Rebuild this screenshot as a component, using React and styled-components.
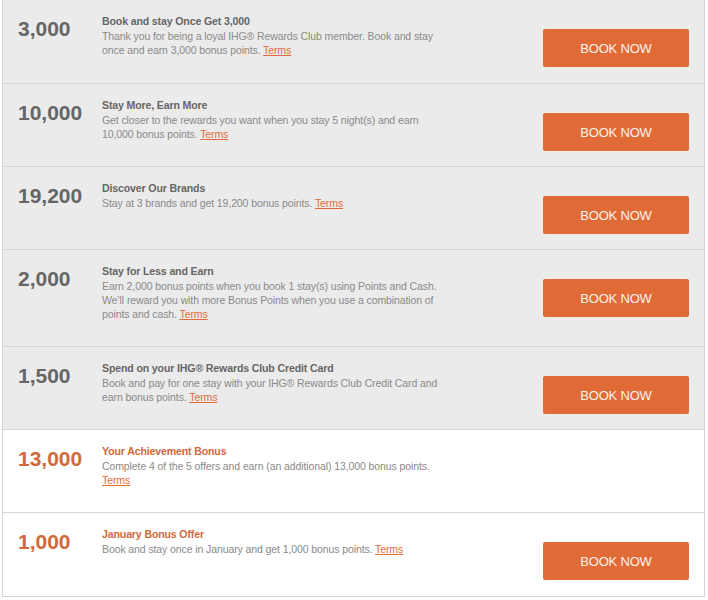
import React from "react";
import styled, { createGlobalStyle } from "styled-components";

const Global = createGlobalStyle`
  html, body { margin: 0; padding: 0; background: #ffffff; }
  body { font-family: "Liberation Sans", Arial, sans-serif; }
`;

const Page = styled.div`
  padding: 0 3px 0 2px;
`;

const List = styled.div`
  border: 1px solid #d6d6d6;
  border-top: none;
  display: flex;
  flex-direction: column;
`;

const Row = styled.div`
  display: flex;
  align-items: flex-start;
  min-height: ${(p) => (p.$first ? "84px" : "83px")};
  box-sizing: border-box;
  padding: 14px 15px 0 15px;
  background: ${(p) => (p.$highlight ? "#ffffff" : "#ebebeb")};
  border-bottom: 1px solid #d6d6d6;
  &:last-child { border-bottom: none; }
`;

const Points = styled.div`
  width: 84px;
  flex: none;
  padding-top: 3px;
  font-size: 21px;
  line-height: 24px;
  font-weight: bold;
  color: ${(p) => (p.$highlight ? "#d06a3d" : "#666666")};
`;

const Info = styled.div`
  width: 345px;
  flex: none;
  padding-bottom: 25px;
`;

const Title = styled.div`
  font-size: 10.6px;
  line-height: 15px;
  font-weight: bold;
  letter-spacing: -0.15px;
  color: ${(p) => (p.$highlight ? "#d06a3d" : "#666666")};
`;

const Desc = styled.p`
  margin: 0;
  font-size: 10.5px;
  line-height: 14px;
  letter-spacing: -0.1px;
  color: #8a8a8a;
`;

const Terms = styled.a`
  color: #e06b3a;
  text-decoration: underline;
  cursor: pointer;
`;

const Action = styled.div`
  margin-left: auto;
  padding-top: 15px;
`;

const BookButton = styled.button`
  width: 146px;
  height: 38px;
  border: none;
  border-radius: 2px;
  background: #e06b36;
  color: #fdf3ec;
  font-family: "Liberation Sans", Arial, sans-serif;
  font-size: 13px;
  letter-spacing: -0.2px;
  cursor: pointer;
`;

const offers = [
  {
    points: "3,000",
    title: "Book and stay Once Get 3,000",
    desc: "Thank you for being a loyal IHG® Rewards Club member. Book and stay once and earn 3,000 bonus points.",
    button: true,
  },
  {
    points: "10,000",
    title: "Stay More, Earn More",
    desc: "Get closer to the rewards you want when you stay 5 night(s) and earn 10,000 bonus points.",
    button: true,
  },
  {
    points: "19,200",
    title: "Discover Our Brands",
    desc: "Stay at 3 brands and get 19,200 bonus points.",
    button: true,
  },
  {
    points: "2,000",
    title: "Stay for Less and Earn",
    desc: "Earn 2,000 bonus points when you book 1 stay(s) using Points and Cash. We’ll reward you with more Bonus Points when you use a combination of points and cash.",
    button: true,
  },
  {
    points: "1,500",
    title: "Spend on your IHG® Rewards Club Credit Card",
    desc: "Book and pay for one stay with your IHG® Rewards Club Credit Card and earn bonus points.",
    button: true,
  },
  {
    points: "13,000",
    title: "Your Achievement Bonus",
    desc: "Complete 4 of the 5 offers and earn (an additional) 13,000 bonus points.",
    button: false,
    highlight: true,
  },
  {
    points: "1,000",
    title: "January Bonus Offer",
    desc: "Book and stay once in January and get 1,000 bonus points.",
    button: true,
    highlight: true,
  },
];

export default function App() {
  return (
    <>
      <Global />
      <Page>
        <List>
          {offers.map((o, i) => (
            <Row key={o.title} $highlight={o.highlight} $first={i === 0}>
              <Points $highlight={o.highlight}>{o.points}</Points>
              <Info>
                <Title $highlight={o.highlight}>{o.title}</Title>
                <Desc>
                  {o.desc} <Terms>Terms</Terms>
                </Desc>
              </Info>
              {o.button && (
                <Action>
                  <BookButton>BOOK NOW</BookButton>
                </Action>
              )}
            </Row>
          ))}
        </List>
      </Page>
    </>
  );
}
